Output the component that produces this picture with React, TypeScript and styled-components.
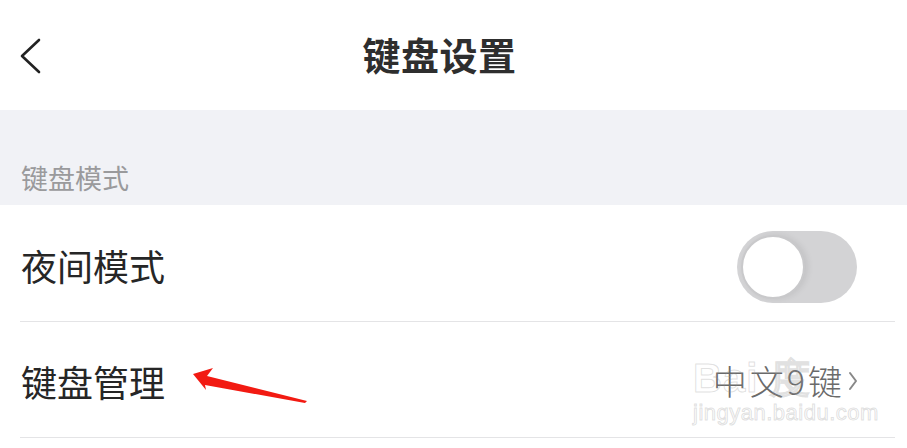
import React from "react";
import styled, { createGlobalStyle } from "styled-components";

const Global = createGlobalStyle`
  html, body { margin: 0; padding: 0; background: #ffffff; }
  body { font-family: "Noto Sans CJK SC", "Noto Sans", sans-serif; }
`;

const Page = styled.div`
  width: 907px;
  height: 448px;
  overflow: hidden;
  position: relative;
  background: #fff;
`;

const Header = styled.header`
  height: 110px;
  display: grid;
  grid-template-columns: 1fr auto 1fr;
  align-items: center;
`;

const Back = styled.div`
  padding-left: 19px;
  display: flex;
  align-items: center;
  height: 40px;
  padding-top: 1px;
`;

const Title = styled.h1`
  margin: 0 28px 0 0;
  padding-bottom: 2px;
  font-size: 38px;
  font-weight: 600;
  color: #2e2e2e;
  letter-spacing: 0.5px;
  line-height: 1;
`;

const SectionHead = styled.div`
  height: 95px;
  background: #f1f2f6;
  display: flex;
  align-items: flex-end;
  padding: 0 0 14px 21px;
  box-sizing: border-box;
  font-size: 27px;
  color: #9a9a9c;
  line-height: 1;
`;

const List = styled.div`
  display: flex;
  flex-direction: column;
`;

const Row = styled.div<{ $h: number; $pt: number }>`
  height: ${(p) => p.$h}px;
  display: flex;
  align-items: center;
  justify-content: space-between;
  padding: ${(p) => p.$pt}px 49px 0 21px;
  position: relative;
  box-sizing: border-box;
  border-bottom: 1px solid transparent;
  &::after {
    content: "";
    position: absolute;
    left: 20px;
    right: 12px;
    bottom: -1px;
    height: 1px;
    background: #e4e4e6;
  }
`;

const Label = styled.span`
  font-size: 36px;
  color: #262626;
  line-height: 1;
`;

const Switch = styled.div`
  width: 120px;
  height: 72px;
  border-radius: 36px;
  background: #d3d3d5;
  display: flex;
  align-items: center;
  padding-left: 4px;
  box-sizing: border-box;
  margin-right: 1px;
  margin-top: 3px;
`;

const Knob = styled.div`
  width: 60px;
  height: 60px;
  border-radius: 50%;
  background: #fff;
  border: 2px solid #c9c9cb;
  box-shadow: 3px 0 6px rgba(0, 0, 0, 0.08);
`;

const Value = styled.span`
  display: flex;
  align-items: center;
  gap: 3px;
  font-size: 34px;
  font-weight: 300;
  color: #6a6a6a;
  line-height: 1;
  letter-spacing: 3px;
`;

const Watermark = styled.div`
  position: absolute;
  left: 693px;
  top: 358px;
  width: 170px;
  pointer-events: none;
  font-family: "Liberation Sans", Arial, sans-serif;
  color: transparent;
  -webkit-text-stroke: 1px rgba(150, 150, 150, 0.3);
`;

const WmBig = styled.div`
  font-size: 40px;
  font-weight: 700;
  line-height: 1;
  letter-spacing: 1px;
`;

const WmSmall = styled.div`
  font-size: 22px;
  line-height: 1;
  margin-top: 4px;
  letter-spacing: 0.5px;
`;

const ArrowLayer = styled.svg`
  position: absolute;
  left: 185px;
  top: 360px;
  pointer-events: none;
`;

export default function App() {
  return (
    <Page>
      <Global />
      <Header>
        <Back>
          <svg width="22" height="36" viewBox="0 0 22 36">
            <path d="M20 2 L3 18 L20 34" fill="none" stroke="#222" strokeWidth="2.6" strokeLinecap="round" strokeLinejoin="round" />
          </svg>
        </Back>
        <Title>键盘设置</Title>
        <div />
      </Header>
      <SectionHead>键盘模式</SectionHead>
      <List>
        <Row $h={117} $pt={4}>
          <Label>夜间模式</Label>
          <Switch>
            <Knob />
          </Switch>
        </Row>
        <Row $h={116} $pt={2}>
          <Label>键盘管理</Label>
          <Value>
            中文9键
            <svg width="10" height="20" viewBox="0 0 10 20">
              <path d="M2 2 L8 10 L2 18" fill="none" stroke="#888" strokeWidth="2" strokeLinecap="round" strokeLinejoin="round" />
            </svg>
          </Value>
        </Row>
      </List>
      <Watermark>
        <WmBig>Bai 度</WmBig>
        <WmSmall>jingyan.baidu.com</WmSmall>
      </Watermark>
      <ArrowLayer width="130" height="50" viewBox="0 0 130 50">
        <path d="M8 14 L28 8 L22 16 L122 41 L120 43 L20 25 L21 30 Z" fill="#f21a12" />
      </ArrowLayer>
    </Page>
  );
}
